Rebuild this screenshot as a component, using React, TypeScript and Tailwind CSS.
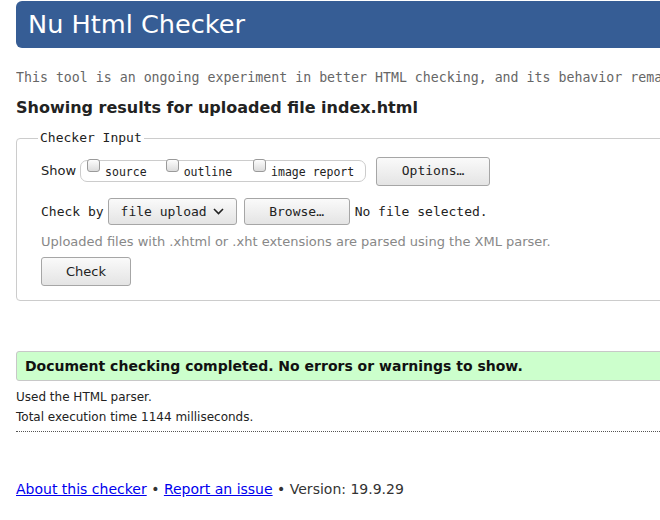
import React from "react";

const sans = "font-['DejaVu_Sans',sans-serif]";
const mono = "font-['DejaVu_Sans_Mono',monospace]";

function Box() {
  return (
    <span className="inline-block w-[13px] h-[13px] rounded-[3px] border border-[#9a9a9a] bg-gradient-to-b from-[#fdfdfd] to-[#dcdcdc] shrink-0" />
  );
}

function Btn({ children, className = "" }: { children: React.ReactNode; className?: string }) {
  return (
    <button
      className={
        "flex items-center justify-center rounded-[3px] border border-[#a6a6a6] bg-gradient-to-b from-[#fafafa] to-[#e4e4e4] text-[13px] text-[#222] " +
        className
      }
    >
      {children}
    </button>
  );
}

export default function App() {
  return (
    <div className="w-[660px] h-[520px] overflow-hidden bg-white">
      <div className={"w-[900px] pl-4 pt-px " + sans}>
        <div className="h-[47px] rounded-l-[6px] bg-[#365d95] pl-3 flex items-center">
          <h1 className="text-[25.6px] text-white leading-none">Nu Html Checker</h1>
        </div>

        <p className={"mt-[22px] w-[644px] overflow-hidden text-[13.25px] leading-[16px] text-[#666] whitespace-nowrap " + mono}>
          This tool is an ongoing experiment in better HTML checking, and its behavior rema
        </p>

        <h2 className="mt-[12px] text-[16px] font-bold text-[#222] leading-[20px]">
          Showing results for uploaded file index.html
        </h2>

        <fieldset className="mt-[13px] w-[700px] rounded-[4px] border border-[#cccccc] pl-6 pb-[14px] pt-[12px]">
          <legend className={"-ml-[3px] px-[2px] text-[13px] text-[#222] leading-[14px] " + mono}>Checker Input</legend>

          <div className="flex items-center h-[28px]">
            <span className="text-[13px] text-[#222] mr-[4px]">Show</span>
            <div className={"flex items-start h-[22px] w-[286px] rounded-[7px] border border-[#cccccc] px-[6px] text-[11.5px] text-[#222] -mt-[1px] " + mono}>
              <label className="flex items-start -mt-[2px]">
                <Box />
                <span className="ml-[5px] mt-[6px] leading-[14px]">source</span>
              </label>
              <label className="flex items-start -mt-[2px] ml-[19px]">
                <Box />
                <span className="ml-[5px] mt-[6px] leading-[14px]">outline</span>
              </label>
              <label className="flex items-start -mt-[2px] ml-[21px]">
                <Box />
                <span className="ml-[5px] mt-[6px] leading-[14px]">image report</span>
              </label>
            </div>
            <Btn className={"ml-[10px] w-[114px] h-[29px] " + mono}>Options…</Btn>
          </div>

          <div className={"flex items-center mt-[13px] h-[27px] text-[13px] text-[#222] " + mono}>
            <span>Check by</span>
            <Btn className={"ml-[4px] w-[129px] h-[27px] gap-[6px] " + mono}>
              <span>file upload</span>
              <svg width="11" height="7" viewBox="0 0 11 7" fill="none" stroke="#222" strokeWidth="1.6">
                <path d="M1 1l4.5 4.5L10 1" />
              </svg>
            </Btn>
            <Btn className={"ml-[7px] w-[106px] h-[27px] " + mono}>Browse…</Btn>
            <span className="ml-[5px]">No file selected.</span>
          </div>

          <p className="mt-[9px] text-[13px] text-[#888] leading-[16px]">
            Uploaded files with .xhtml or .xht extensions are parsed using the XML parser.
          </p>

          <Btn className="mt-[7px] w-[90px] h-[29px]">Check</Btn>
        </fieldset>

        <div className="mt-[50px] h-[30px] rounded-[3px] border border-[#c8c8c8] bg-[#ccffcc] pl-2 flex items-center">
          <p className="text-[14px] font-bold text-[#111]">
            Document checking completed. No errors or warnings to show.
          </p>
        </div>

        <p className="mt-[6px] text-[12px] text-[#222] leading-[20px]">Used the HTML parser.</p>
        <p className="text-[12px] text-[#222] leading-[20px]">Total execution time 1144 milliseconds.</p>
        <div className="mt-[4px] border-t border-dotted border-[#555]" />

        <p className="mt-[48px] text-[14px] text-[#333] leading-[18px]">
          <a href="#" className="text-[#0000ee] underline">About this checker</a>
          {" • "}
          <a href="#" className="text-[#0000ee] underline">Report an issue</a>
          {" • Version: 19.9.29"}
        </p>
      </div>
    </div>
  );
}
